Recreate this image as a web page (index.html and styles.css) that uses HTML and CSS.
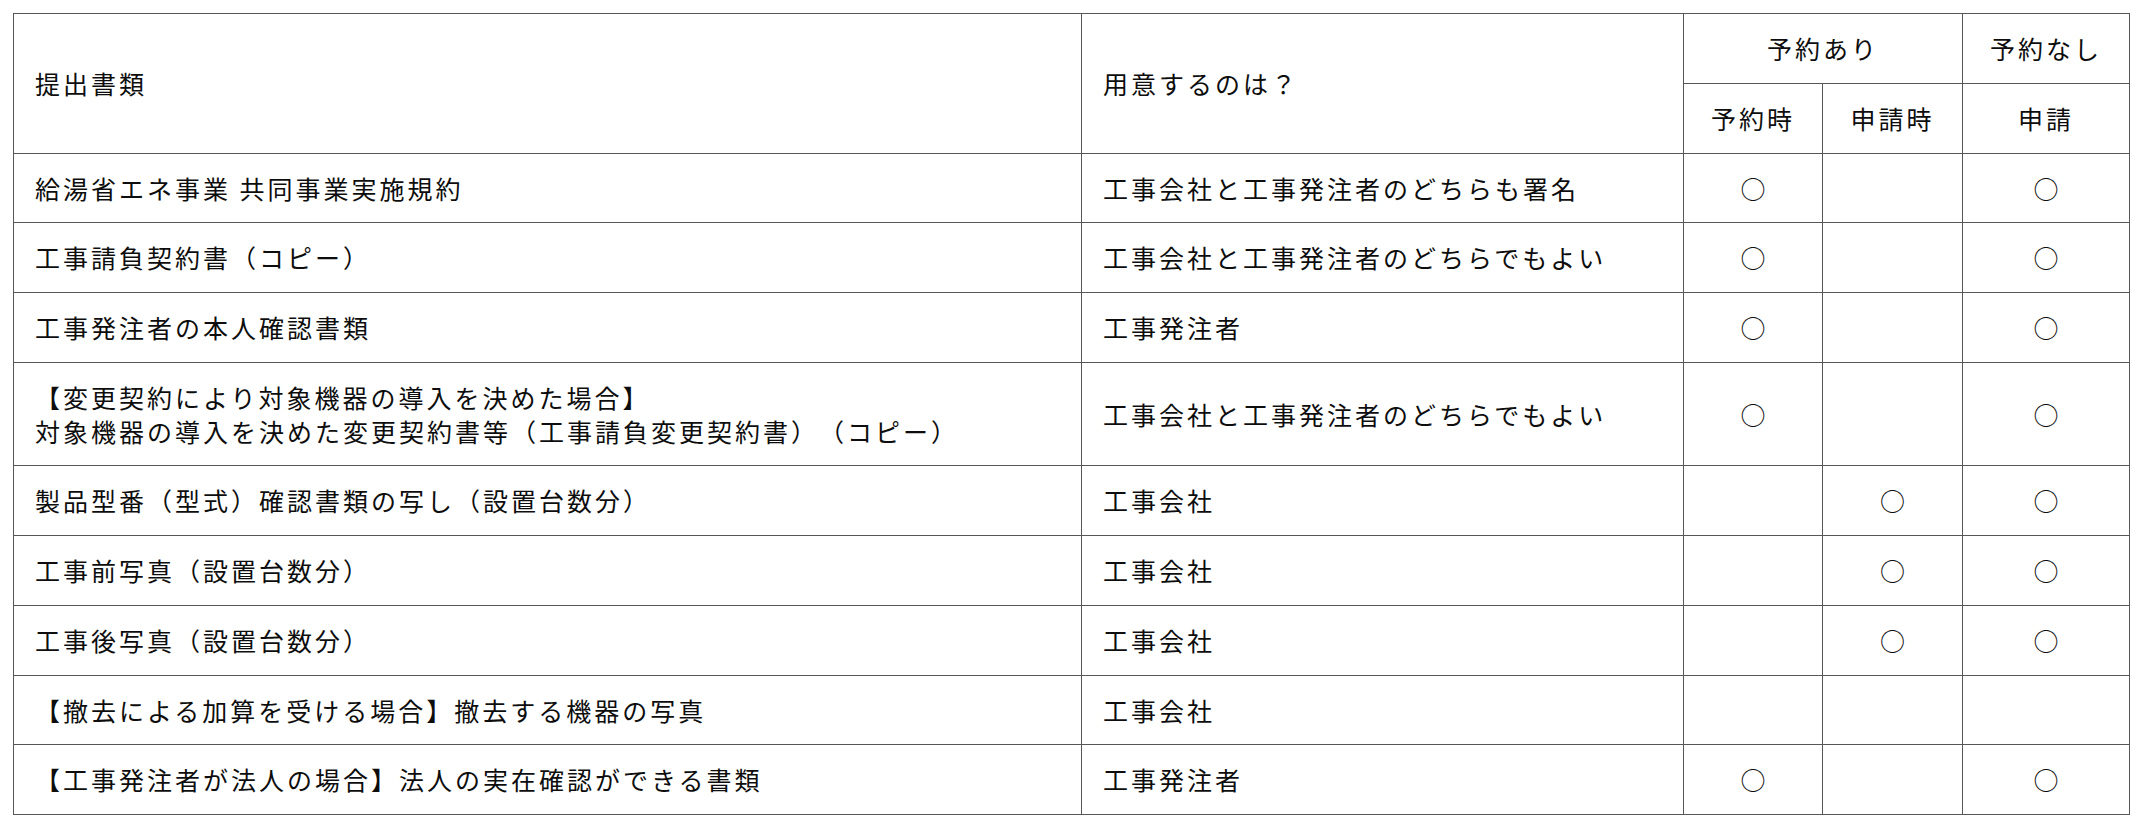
FILE: index.html
```html
<!DOCTYPE html>
<html lang="ja">
<head>
<meta charset="utf-8">
<title>提出書類</title>
<link rel="stylesheet" href="styles.css">
</head>
<body>
<div class="wrap">
<table class="docs">
  <colgroup>
    <col class="c-doc">
    <col class="c-who">
    <col class="c-a">
    <col class="c-b">
    <col class="c-c">
  </colgroup>
  <thead>
    <tr>
      <th rowspan="2" class="left">提出書類</th>
      <th rowspan="2" class="left">用意するのは？</th>
      <th colspan="2">予約あり</th>
      <th>予約なし</th>
    </tr>
    <tr>
      <th>予約時</th>
      <th>申請時</th>
      <th>申請</th>
    </tr>
  </thead>
  <tbody>
    <tr>
      <td>給湯省エネ事業 共同事業実施規約</td>
      <td>工事会社と工事発注者のどちらも署名</td>
      <td class="mark">○</td>
      <td class="mark"></td>
      <td class="mark">○</td>
    </tr>
    <tr>
      <td>工事請負契約書（コピー）</td>
      <td>工事会社と工事発注者のどちらでもよい</td>
      <td class="mark">○</td>
      <td class="mark"></td>
      <td class="mark">○</td>
    </tr>
    <tr>
      <td>工事発注者の本人確認書類</td>
      <td>工事発注者</td>
      <td class="mark">○</td>
      <td class="mark"></td>
      <td class="mark">○</td>
    </tr>
    <tr>
      <td>【変更契約により対象機器の導入を決めた場合】<br>対象機器の導入を決めた変更契約書等（工事請負変更契約書）（コピー）</td>
      <td>工事会社と工事発注者のどちらでもよい</td>
      <td class="mark">○</td>
      <td class="mark"></td>
      <td class="mark">○</td>
    </tr>
    <tr>
      <td>製品型番（型式）確認書類の写し（設置台数分）</td>
      <td>工事会社</td>
      <td class="mark"></td>
      <td class="mark">○</td>
      <td class="mark">○</td>
    </tr>
    <tr>
      <td>工事前写真（設置台数分）</td>
      <td>工事会社</td>
      <td class="mark"></td>
      <td class="mark">○</td>
      <td class="mark">○</td>
    </tr>
    <tr>
      <td>工事後写真（設置台数分）</td>
      <td>工事会社</td>
      <td class="mark"></td>
      <td class="mark">○</td>
      <td class="mark">○</td>
    </tr>
    <tr>
      <td>【撤去による加算を受ける場合】撤去する機器の写真</td>
      <td>工事会社</td>
      <td class="mark"></td>
      <td class="mark"></td>
      <td class="mark"></td>
    </tr>
    <tr>
      <td>【工事発注者が法人の場合】法人の実在確認ができる書類</td>
      <td>工事発注者</td>
      <td class="mark">○</td>
      <td class="mark"></td>
      <td class="mark">○</td>
    </tr>
  </tbody>
</table>
</div>
</body>
</html>
```

FILE: styles.css
```css
html, body {
  margin: 0;
  padding: 0;
  background: #ffffff;
}

.wrap {
  padding: 13px 0 0 13px;
}

.docs {
  border-collapse: collapse;
  table-layout: fixed;
  width: 2116px;
  font-family: "Noto Sans CJK JP", "Noto Sans", sans-serif;
  font-size: 25px;
  letter-spacing: 3px;
  line-height: 33.75px;
  color: #0d0d0d;
  text-spacing-trim: space-all;
  font-feature-settings: normal;
}

.c-doc { width: 1068px; }
.c-who { width: 602px; }
.c-a { width: 139px; }
.c-b { width: 140px; }
.c-c { width: 167px; }

.docs th,
.docs td {
  border: 1px solid #575757;
  padding: 18px 21px 17px;
  vertical-align: middle;
  text-align: left;
  font-weight: normal;
  white-space: nowrap;
}

.docs th {
  text-align: center;
  padding-left: 0;
  padding-right: 0;
}

.docs th.left {
  text-align: left;
  padding-left: 21px;
}

.docs td.mark {
  text-align: center;
  padding-left: 0;
  padding-right: 0;
  letter-spacing: 0;
}
```
